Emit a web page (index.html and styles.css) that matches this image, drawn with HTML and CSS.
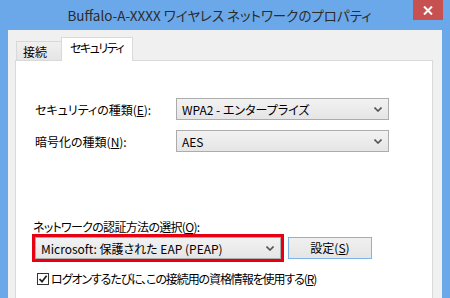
FILE: index.html
```html
<!DOCTYPE html>
<html lang="ja">
<head>
    <meta charset="UTF-8">
    <title>Buffalo-A-XXXX ワイヤレス ネットワークのプロパティ</title>
    <link rel="stylesheet" href="styles.css">
</head>
<body>
    <div class="window">
        <div class="titlebar">
            <div class="title">Buffalo-A-XXXX ワイヤレス ネットワークのプロパティ</div>
            <div class="close">
                <svg width="10" height="9" viewBox="0 0 10 9"><path d="M1 0.5 L9 8.5 M9 0.5 L1 8.5" stroke="#fff" stroke-width="2"/></svg>
            </div>
        </div>
        <div class="client">
            <div class="tabs">
                <div class="tab">接続</div>
                <div class="tab active">セキュリティ</div>
            </div>
            <div class="panel">
                <div class="row">
                    <div class="label">セキュリティの種類(<u>E</u>):</div>
                    <div class="combo wide">
                        <span>WPA2 - エンタープライズ</span>
                        <svg class="arrow" width="8" height="5" viewBox="0 0 8 5"><path d="M0.5 0.5 L4 4 L7.5 0.5" stroke="#555" stroke-width="1.6" fill="none"/></svg>
                    </div>
                </div>
                <div class="row">
                    <div class="label">暗号化の種類(<u>N</u>):</div>
                    <div class="combo wide">
                        <span>AES</span>
                        <svg class="arrow" width="8" height="5" viewBox="0 0 8 5"><path d="M0.5 0.5 L4 4 L7.5 0.5" stroke="#555" stroke-width="1.6" fill="none"/></svg>
                    </div>
                </div>

                <div class="auth-label">ネットワークの認証方法の選択(<u>O</u>):</div>
                <div class="auth-row">
                    <div class="highlight">
                        <div class="combo method">
                            <span>Microsoft: 保護された EAP (PEAP)</span>
                            <svg class="arrow" width="8" height="5" viewBox="0 0 8 5"><path d="M0.5 0.5 L4 4 L7.5 0.5" stroke="#555" stroke-width="1.6" fill="none"/></svg>
                        </div>
                    </div>
                    <div class="button">設定(<u>S</u>)</div>
                </div>
                <div class="check-row">
                    <svg class="checkbox" width="12" height="12" viewBox="0 0 12 12">
                        <rect x="0.5" y="0.5" width="11" height="11" fill="#fff" stroke="#333"/>
                        <path d="M2.5 6 L5 8.7 L9.6 2.8" stroke="#222" stroke-width="1.8" fill="none"/>
                    </svg>
                    <span class="check-text">ログオンするたびに、この接続用の資格情報を使用する(<u>R</u>)</span>
                </div>
            </div>
        </div>
    </div>
</body>
</html>
```

FILE: styles.css
```css
body {
    margin: 0;
    font-family: "Noto Sans CJK JP", "Noto Sans", sans-serif;
    font-feature-settings: "palt";
}

.window {
    width: 450px;
    height: 298px;
    background: #6ba8ea;
    display: flex;
    flex-direction: column;
    overflow: hidden;
}

.titlebar {
    height: 30px;
    display: flex;
    align-items: flex-start;
    flex-shrink: 0;
}

.title {
    flex: 1;
    text-align: center;
    padding-left: 26px;
    font-size: 13.5px;
    line-height: 31px;
    color: #2b2b2b;
}

.close {
    width: 30px;
    height: 20px;
    margin-right: 7px;
    background: #c75050;
    display: flex;
    align-items: center;
    justify-content: center;
}

.client {
    flex: 1;
    margin: 0 8px;
    background: #f0f0f0;
    padding: 8px 9px 0 7px;
    display: flex;
    flex-direction: column;
}

.tabs {
    display: flex;
    align-items: flex-end;
    height: 22px;
    padding-left: 1px;
    position: relative;
    z-index: 1;
}

.tab {
    height: 18px;
    padding: 0 14px 0 6px;
    border: 1px solid #d9d9d9;
    border-bottom: none;
    background: linear-gradient(#f0f0f0, #e5e5e5);
    font-size: 12px;
    line-height: 19px;
    color: #000;
}

.tab.active {
    height: 23px;
    margin-bottom: -1px;
    margin-left: -1px;
    padding: 0 9px 0 8px;
    background: #fff;
    line-height: 20px;
    letter-spacing: -1.5px;
}

.panel {
    flex: 1;
    background: #fff;
    border: 1px solid #d9d9d9;
    border-bottom: none;
    padding: 37px 0 0 19px;
    font-size: 12px;
    color: #000;
}

.row {
    display: flex;
    align-items: center;
    height: 22px;
    margin-bottom: 10px;
}

.label {
    width: 141px;
}

.combo {
    height: 20px;
    border: 1px solid #acacac;
    background: linear-gradient(#f2f2f2, #e5e5e5);
    display: flex;
    align-items: center;
    justify-content: space-between;
    padding: 0 6px 0 5px;
    box-sizing: content-box;
}

.combo.wide {
    width: 200px;
}

.combo.method {
    width: 233px;
}

.arrow {
    margin-top: 1px;
}

.auth-label {
    margin-top: 68px;
    line-height: 14px;
    margin-left: -2px;
    letter-spacing: -0.7px;
}

.auth-row {
    display: flex;
    align-items: center;
    margin-left: -3px;
}

.highlight {
    border: 3px solid #e60012;
}

.button {
    width: 82px;
    height: 20px;
    margin-left: 4px;
    border: 1px solid #7eb4ea;
    background: linear-gradient(#f0f0f0, #e5e5e5);
    text-align: center;
    line-height: 20px;
    box-sizing: content-box;
}

.check-row {
    display: flex;
    align-items: center;
    margin-top: 9px;
    margin-left: 2px;
    line-height: 16px;
}

.checkbox {
    margin-right: 2px;
}

.check-text {
    letter-spacing: -1.1px;
}
```
